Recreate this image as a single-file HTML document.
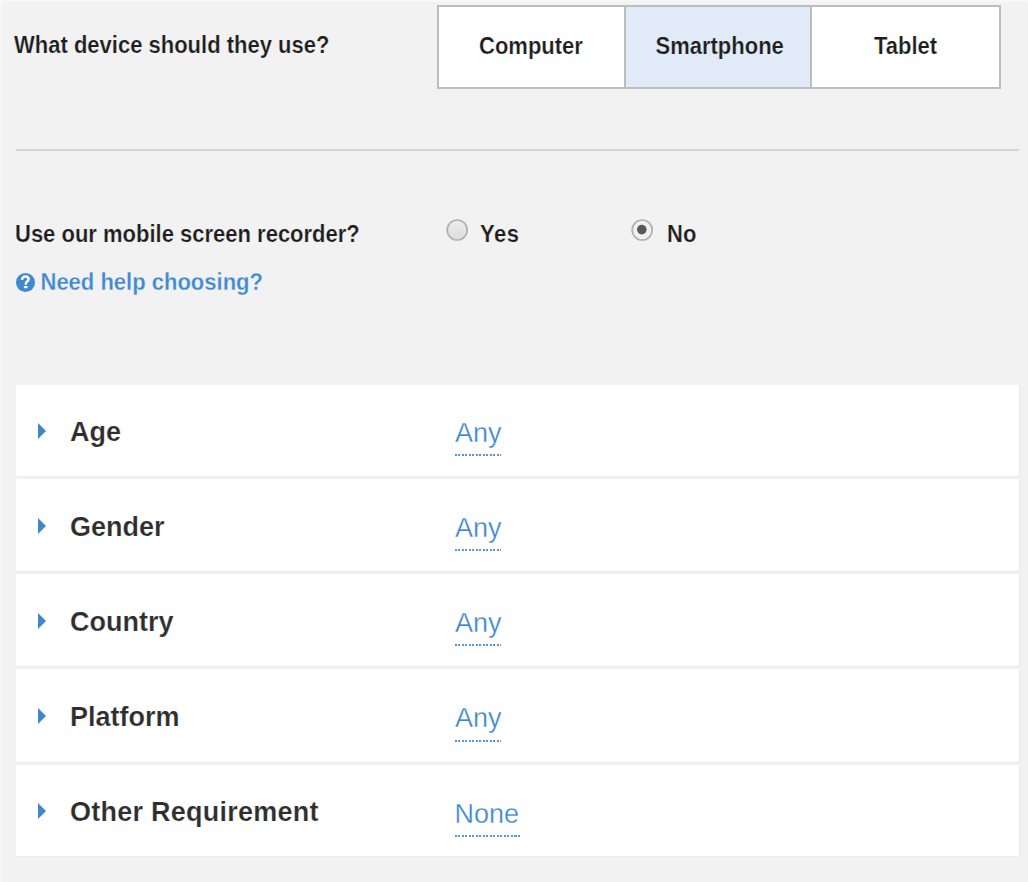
<!DOCTYPE html>
<html>
<head>
<meta charset="utf-8">
<style>
html,body{margin:0;padding:0;}
body{width:1028px;height:882px;background:#f2f2f2;position:relative;overflow:hidden;font-family:"Liberation Sans",sans-serif;}
.t{position:absolute;white-space:nowrap;line-height:1;}
.lbl{font-size:22px;font-weight:bold;color:#1e1e1e;-webkit-text-stroke:0.2px #f2f2f2;transform:scaleY(1.1);transform-origin:0 18.62px;}
.link{font-size:22px;font-weight:bold;color:#3f8ad2;-webkit-text-stroke:0.25px #f2f2f2;transform:scaleY(1.05);transform-origin:0 18.62px;}
.seg{position:absolute;top:5px;left:437px;width:560px;height:80px;border:2px solid #bdbdbd;background:#fff;}
.seg .s{position:absolute;top:0;height:80px;}
.seg .div{position:absolute;top:0;width:2px;height:80px;background:#bdbdbd;}
.hr{position:absolute;left:16px;width:1003px;top:149px;height:2px;background:#d6d6d6;}
.radio{position:absolute;width:18px;height:18px;border:2px solid #b4b4b4;border-radius:50%;background:linear-gradient(#ececec,#dedede);box-sizing:content-box;}
.dot{position:absolute;left:4px;top:4px;width:10px;height:10px;border-radius:50%;background:#555;}
.help{position:absolute;left:16px;top:273px;width:19px;height:19px;border-radius:50%;background:#3f89d0;}
.row{position:absolute;left:16px;width:1003px;background:#fff;box-shadow:1px 1px 1px rgba(0,0,0,0.025);}
.title{font-size:27px;font-weight:bold;color:#2e2e2e;-webkit-text-stroke:0.2px #fff;transform:scaleY(1.04);transform-origin:0 22.86px;}
.val{font-size:27px;color:#3a86d0;-webkit-text-stroke:0.3px #fff;}
.ul{position:absolute;height:2px;background:repeating-linear-gradient(90deg,#5a97d4 0,#5a97d4 2px,transparent 2px,transparent 3.5px);}
.arr{position:absolute;left:38px;width:0;height:0;border-top:8px solid transparent;border-bottom:8px solid transparent;border-left:8.5px solid #3f87cc;}
</style>
</head>
<body>
<div id="wrap" style="position:absolute;left:0;top:0;width:1028px;height:882px;">
<div style="position:absolute;left:0;top:0;width:3px;height:882px;background:linear-gradient(90deg,#f9f9f9,#f2f2f2);"></div>
<div style="position:absolute;left:0;top:0;width:1028px;height:3px;background:linear-gradient(#f9f9f9,#f2f2f2);"></div>
<div class="t lbl" style="left:14px;top:34.88px;">What device should they use?</div>
<div class="seg">
  <div class="s" style="left:187px;width:184px;background:#e0ebf7;"></div>
  <div class="div" style="left:185px;"></div>
  <div class="div" style="left:371px;"></div>
</div>
<div class="t lbl" style="left:479px;top:36.18px;-webkit-text-stroke-color:#fff;">Computer</div>
<div class="t lbl" style="left:655.5px;top:36.18px;-webkit-text-stroke-color:#e0ebf7;">Smartphone</div>
<div class="t lbl" style="left:874px;top:36.18px;-webkit-text-stroke-color:#fff;">Tablet</div>
<div class="hr"></div>
<div class="t lbl" style="left:15px;top:223.88px;">Use our mobile screen recorder?</div>
<svg style="position:absolute;left:446px;top:219px" width="23" height="23" viewBox="0 0 23 23"><defs><linearGradient id="rg" x1="0" y1="0" x2="0" y2="1"><stop offset="0" stop-color="#ededed"/><stop offset="1" stop-color="#dcdcdc"/></linearGradient></defs><circle cx="11.2" cy="11" r="10" fill="url(#rg)" stroke="#b2b2b2" stroke-width="1.7"/></svg>
<div class="t lbl" style="left:480px;top:224.38px;letter-spacing:0.5px;">Yes</div>
<svg style="position:absolute;left:631px;top:219px" width="23" height="23" viewBox="0 0 23 23"><circle cx="11.2" cy="11" r="10" fill="#f1f1f1" stroke="#b2b2b2" stroke-width="1.7"/><circle cx="10.8" cy="10.6" r="4.8" fill="#585858"/></svg>
<div class="t lbl" style="left:667px;top:224.38px;">No</div>
<div class="help"><svg width="19" height="19" viewBox="0 0 19 19" style="position:absolute;left:0;top:0"><path d="M6 6.9 C6 4.6 7.6 3.5 9.4 3.5 C11.3 3.5 12.6 4.7 12.6 6.4 C12.6 8.4 9.8 8.7 9.8 10.5 L9.8 11.8" stroke="#fff" stroke-width="2.4" fill="none"/><rect x="7.9" y="13" width="3.6" height="2.2" rx="0.4" fill="#fff"/></svg></div>
<div class="t link" style="left:40.5px;top:272.18px;">Need help choosing?</div>
<div class="row" style="top:385px;height:91px;"></div>
<div class="row" style="top:479px;height:92px;"></div>
<div class="row" style="top:574px;height:92px;"></div>
<div class="row" style="top:669px;height:93px;"></div>
<div class="row" style="top:765px;height:91px;"></div>
<div class="arr" style="top:423.2px;"></div>
<div class="t title" style="left:70px;top:418.74px;">Age</div>
<div class="t val" style="left:455px;top:419.74px;">Any</div>
<div class="ul" style="left:455px;top:454.00px;width:46px;"></div>
<div class="arr" style="top:518.2px;"></div>
<div class="t title" style="left:70px;top:513.74px;">Gender</div>
<div class="t val" style="left:455px;top:514.93px;">Any</div>
<div class="ul" style="left:455px;top:549.19px;width:46px;"></div>
<div class="arr" style="top:613.2px;"></div>
<div class="t title" style="left:70px;top:608.74px;">Country</div>
<div class="t val" style="left:455px;top:610.12px;">Any</div>
<div class="ul" style="left:455px;top:644.38px;width:46px;"></div>
<div class="arr" style="top:708.2px;"></div>
<div class="t title" style="left:70px;top:703.74px;">Platform</div>
<div class="t val" style="left:455px;top:705.31px;">Any</div>
<div class="ul" style="left:455px;top:739.57px;width:46px;"></div>
<div class="arr" style="top:803.2px;"></div>
<div class="t title" style="left:70px;top:798.74px;letter-spacing:0.25px;">Other Requirement</div>
<div class="t val" style="left:454.5px;top:800.50px;">None</div>
<div class="ul" style="left:455px;top:834.76px;width:65px;"></div>
</div>
</body>
</html>
